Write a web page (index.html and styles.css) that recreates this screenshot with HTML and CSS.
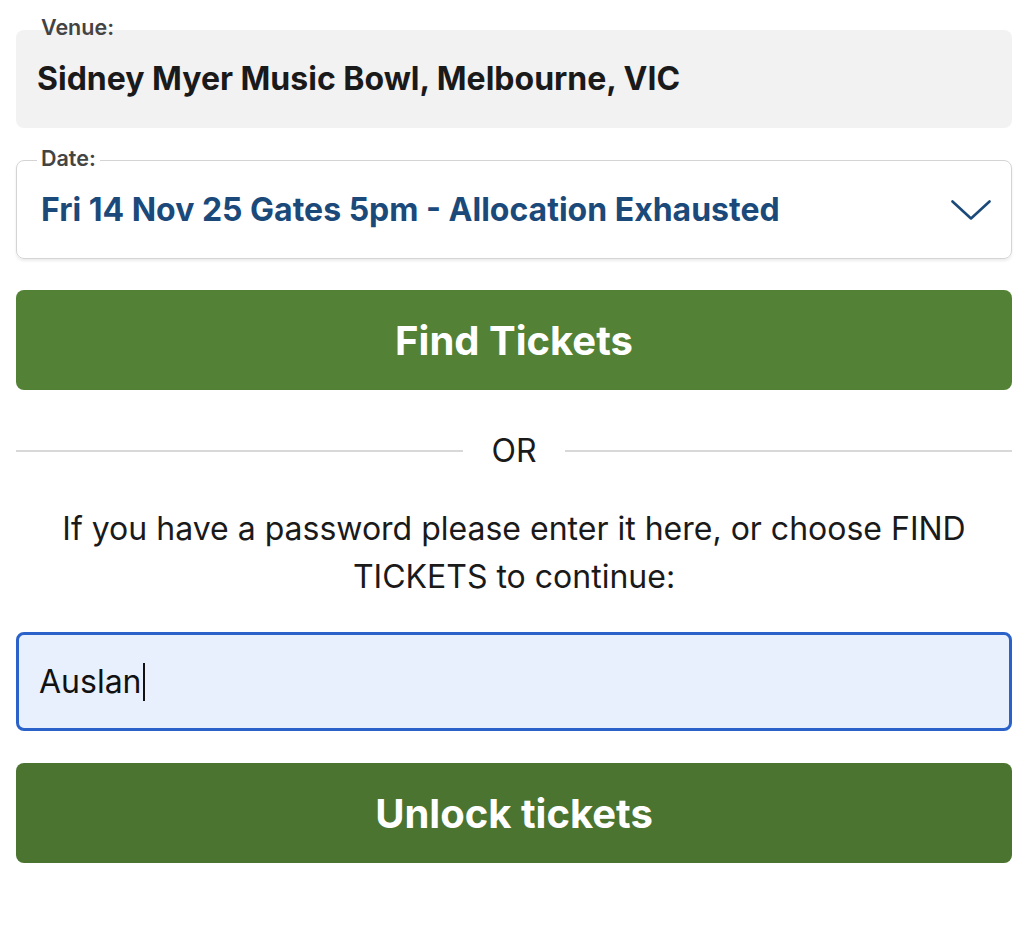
FILE: index.html
```html
<!DOCTYPE html>
<html lang="en">
<head>
<meta charset="utf-8">
<title>Find Tickets</title>
<link rel="stylesheet" href="styles.css">
</head>
<body>
<main class="form">
  <fieldset class="field field-venue">
    <legend class="field-label">Venue:</legend>
    <div class="venue-value">Sidney Myer Music Bowl, Melbourne, VIC</div>
  </fieldset>

  <fieldset class="field field-date">
    <legend class="field-label">Date:</legend>
    <div class="select-row">
      <span class="date-value">Fri 14 Nov 25 Gates 5pm - Allocation Exhausted</span>
      <svg class="chevron" width="40" height="20" viewBox="0 0 40 20" aria-hidden="true">
        <path d="M1.5 1.5 L20 18.5 L38.5 1.5" fill="none" stroke="#1b4a7a" stroke-width="2.6" stroke-linecap="round" stroke-linejoin="round"/>
      </svg>
    </div>
  </fieldset>

  <button class="btn btn-find" type="button">Find Tickets</button>

  <div class="divider">
    <span class="divider-line"></span>
    <span class="divider-text">OR</span>
    <span class="divider-line"></span>
  </div>

  <p class="hint">If you have a password please enter it here, or choose FIND TICKETS to continue:</p>

  <div class="password">
    <span class="password-text">Auslan</span><span class="caret"></span>
  </div>

  <button class="btn btn-unlock" type="button">Unlock tickets</button>
</main>
</body>
</html>
```

FILE: styles.css
```css
* { box-sizing: border-box; }

html, body {
  margin: 0;
  padding: 0;
  background: #ffffff;
}

body {
  font-family: Inter, "Liberation Sans", Arial, sans-serif;
  color: #1a1a1a;
}

.form {
  display: flex;
  flex-direction: column;
  padding: 14px 24px 0 16px;
}

.field {
  margin: 0;
  min-width: 0;
  border-radius: 8px;
}

.field-label {
  font-size: 21.5px;
  line-height: 26px;
  font-weight: 600;
  color: #444444;
  padding: 0 4px 5px;
}

.field-venue {
  border: 0;
  background: #f2f2f2;
  padding: 15px 21px 30px;
}

.venue-value {
  font-size: 32px;
  line-height: 38px;
  font-weight: 700;
  color: #1a1a1a;
}

.field-date {
  margin-top: 17px;
  border: 1px solid #d4d4d4;
  background: #ffffff;
  box-shadow: 0 2px 3px rgba(0, 0, 0, 0.08);
  padding: 15px 20px 29px 20px;
}

.select-row {
  display: flex;
  align-items: center;
  justify-content: space-between;
  padding-left: 4px;
}

.date-value {
  font-size: 32px;
  line-height: 38px;
  font-weight: 700;
  color: #1b4a7a;
}

.chevron { display: block; }

.btn {
  width: 100%;
  height: 100px;
  border: 0;
  border-radius: 8px;
  color: #ffffff;
  font-family: inherit;
  font-size: 40px;
  font-weight: 700;
  cursor: pointer;
}

.btn-find {
  margin-top: 31px;
  background: #538135;
}

.btn-unlock {
  margin-top: 32px;
  background: #4b7430;
}

.divider {
  display: flex;
  align-items: center;
  gap: 28px;
  margin-top: 42px;
  height: 38px;
}

.divider-line {
  flex: 1;
  height: 2px;
  background: #d8d8d8;
}

.divider-text {
  font-size: 32px;
  line-height: 38px;
  color: #1a1a1a;
}

.hint {
  margin: 35px 0 0;
  text-align: center;
  font-size: 32px;
  line-height: 48px;
  color: #1a1a1a;
}

.password {
  margin-top: 31px;
  height: 99px;
  border: 3px solid #2b62c9;
  border-radius: 8px;
  background: #e8f0fd;
  display: flex;
  align-items: center;
  padding: 0 20px;
}

.password-text {
  font-size: 32px;
  color: #111111;
}

.caret {
  display: inline-block;
  width: 2px;
  height: 38px;
  background: #111111;
  margin-left: 1px;
}
```
